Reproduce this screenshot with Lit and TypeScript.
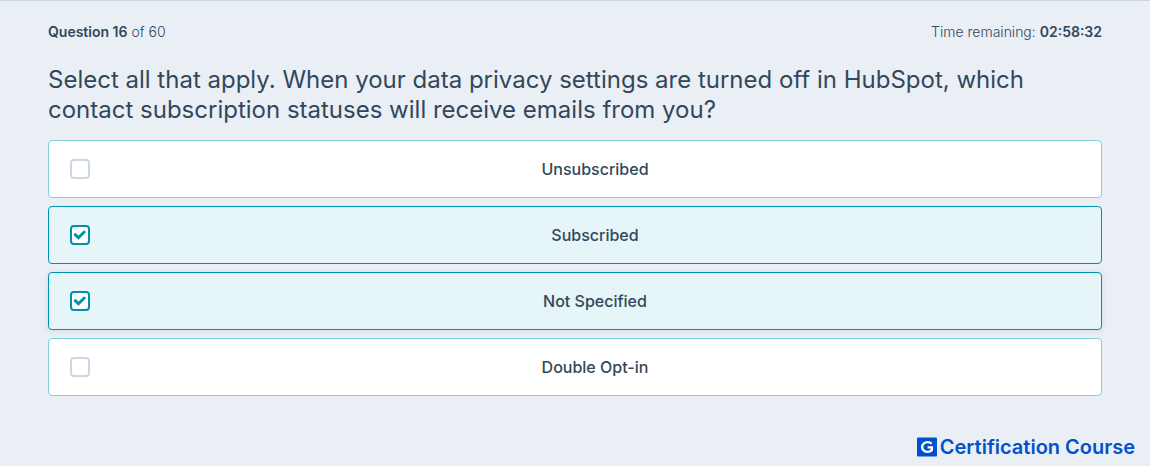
import { LitElement, html, css } from "lit";
import { customElement, state } from "lit/decorators.js";

interface Answer {
  id: string;
  label: string;
  checked: boolean;
}

@customElement("app-root")
export class AppRoot extends LitElement {
  static styles = css`
    :host {
      display: block;
      min-height: 100vh;
      box-sizing: border-box;
      background: #eaeff6;
      border-top: 1px solid #cbd6e2;
      color: #33475b;
      font-family: Inter, "Liberation Sans", sans-serif;
    }
    .page {
      display: flex;
      flex-direction: column;
      min-height: calc(100vh - 1px);
      box-sizing: border-box;
      padding: 20px 48px 7px;
    }
    .status {
      display: flex;
      justify-content: space-between;
      font-size: 14px;
      line-height: 22px;
      font-weight: 300;
    }
    .status p {
      margin: 0;
    }
    .status strong {
      font-weight: 600;
    }
    fieldset {
      border: 0;
      margin: 0;
      padding: 0;
      min-width: 0;
    }
    .question {
      margin: 22px 0 15px;
      font-size: 24px;
      line-height: 30px;
      font-weight: 400;
    }
    .answers {
      display: flex;
      flex-direction: column;
      gap: 8px;
    }
    .answer {
      display: grid;
      grid-template-columns: 40px 1fr;
      align-items: center;
      min-height: 58px;
      box-sizing: border-box;
      padding: 0 21px;
      background: #fff;
      border: 1px solid #7fd1de;
      border-radius: 4px;
      font-size: 16px;
      line-height: 24px;
      font-weight: 500;
      text-align: center;
      cursor: pointer;
    }
    .answer:has(:checked) {
      background: #e5f5f8;
      border-color: #0091ae;
    }
    .answer.latest {
      box-shadow: 0 1px 6px rgba(45, 62, 80, 0.12);
    }
    .box {
      display: grid;
      width: 20px;
      height: 20px;
    }
    .box > * {
      grid-area: 1 / 1;
    }
    .box input {
      appearance: none;
      margin: 0;
      width: 20px;
      height: 20px;
      box-sizing: border-box;
      background: #fff;
      border: 2px solid #cbd6e2;
      border-radius: 4px;
    }
    .box input:checked {
      border-color: #0091ae;
    }
    .box svg {
      pointer-events: none;
      visibility: hidden;
    }
    .box input:checked + svg {
      visibility: visible;
    }
    .brand {
      display: flex;
      align-items: center;
      gap: 3px;
      align-self: flex-end;
      margin-top: auto;
      margin-right: -33px;
      color: #0052cc;
      font-size: 20px;
      line-height: 24px;
      font-weight: 600;
      text-decoration: none;
    }
  `;

  @state() private latest = "not-specified";

  @state() private answers: Answer[] = [
    { id: "unsubscribed", label: "Unsubscribed", checked: false },
    { id: "subscribed", label: "Subscribed", checked: true },
    { id: "not-specified", label: "Not Specified", checked: true },
    { id: "double-opt-in", label: "Double Opt-in", checked: false },
  ];

  private toggle(id: string) {
    this.answers = this.answers.map((a) =>
      a.id === id ? { ...a, checked: !a.checked } : a
    );
    this.latest = id;
  }

  render() {
    return html`
      <main class="page">
        <header class="status">
          <p><strong>Question 16</strong> of 60</p>
          <p>Time remaining: <strong>02:58:32</strong></p>
        </header>
        <h1 class="question" id="question">
          Select all that apply. When your data privacy settings are turned off
          in HubSpot, which contact subscription statuses will receive emails
          from you?
        </h1>
        <fieldset aria-labelledby="question">
          <div class="answers">
            ${this.answers.map(
              (a) => html`
                <label
                  class="answer ${a.id === this.latest ? "latest" : ""}"
                  for=${a.id}
                >
                  <span class="box">
                    <input
                      type="checkbox"
                      id=${a.id}
                      .checked=${a.checked}
                      @change=${() => this.toggle(a.id)}
                    />
                    <svg viewBox="0 0 20 20" width="20" height="20" aria-hidden="true">
                      <path
                        d="M5.2 9.7 8.4 12.7 14.2 7"
                        fill="none"
                        stroke="#0091ae"
                        stroke-width="3"
                        stroke-linecap="round"
                        stroke-linejoin="miter"
                      />
                    </svg>
                  </span>
                  <span>${a.label}</span>
                </label>
              `
            )}
          </div>
        </fieldset>
        <a class="brand" href="#">
          <svg viewBox="0 0 20 20" width="20" height="20" aria-hidden="true">
            <rect width="20" height="19" y="0.5" rx="1" fill="#0052cc" />
            <path
              d="M14.6 6.6A5.5 4.9 0 1 0 14.8 13.2V10.4H10.6"
              fill="none"
              stroke="#fff"
              stroke-width="2.4"
            />
          </svg>
          <span>Certification Course</span>
        </a>
      </main>
    `;
  }
}
